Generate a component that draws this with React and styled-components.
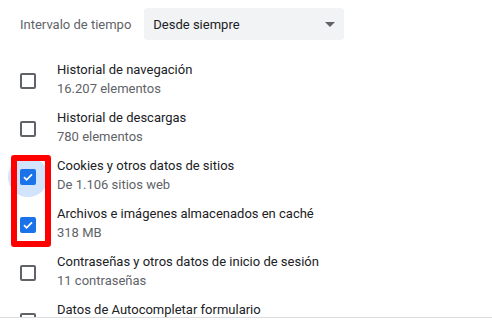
import React from 'react';
import styled, { createGlobalStyle } from 'styled-components';

const Global = createGlobalStyle`
  body { margin: 0; background: #fff; font-family: Roboto, "Liberation Sans", sans-serif; }
`;

const Page = styled.div`
  width: 492px;
  height: 326px;
  overflow: hidden;
  position: relative;
  background: #fff;
`;

const Scroller = styled.div`
  height: 318px;
  overflow: hidden;
  border-bottom: 1px solid #dadce0;
  padding: 8px 0 0 20px;
  box-sizing: border-box;
`;

const Header = styled.div`
  display: flex;
  align-items: center;
  gap: 13px;
  height: 32px;
`;

const Label = styled.span`
  font-size: 13px;
  color: #5f6368;
`;

const Select = styled.div`
  width: 200px;
  height: 32px;
  box-sizing: border-box;
  background: #f1f3f4;
  border-radius: 4px;
  display: flex;
  align-items: center;
  justify-content: space-between;
  padding: 0 8px 0 9px;
  font-size: 13px;
  color: #202124;
`;

const Arrow = styled.span`
  width: 0;
  height: 0;
  border-left: 5px solid transparent;
  border-right: 5px solid transparent;
  border-top: 5px solid #5f6368;
  margin-right: 1px;
`;

const List = styled.div`
  margin-top: 16px;
  display: flex;
  flex-direction: column;
`;

const Row = styled.div`
  height: 48px;
  display: flex;
  align-items: center;
  gap: 21px;
`;

const Control = styled.div`
  position: relative;
  width: 16px;
  height: 16px;
  flex: none;
  margin-top: 2px;
`;

const Ripple = styled.div`
  position: absolute;
  left: -12px;
  top: -12px;
  width: 40px;
  height: 40px;
  border-radius: 50%;
  background: #d2e3fc;
`;

const Box = styled.div`
  position: relative;
  width: 16px;
  height: 16px;
  box-sizing: border-box;
  border-radius: 2px;
  border: 2px solid ${p => (p.checked ? '#1a73e8' : '#5f6368')};
  background: ${p => (p.checked ? '#1a73e8' : 'transparent')};
  display: flex;
  align-items: center;
  justify-content: center;
`;

const Text = styled.div`
  display: flex;
  flex-direction: column;
  line-height: 19px;
  margin-top: -2px;
`;

const Title = styled.span`
  font-size: 13px;
  color: #202124;
`;

const Sub = styled.span`
  font-size: 13px;
  color: #5f6368;
`;

const Highlight = styled.div`
  position: absolute;
  left: 11px;
  top: 155px;
  width: 40px;
  height: 92px;
  box-sizing: border-box;
  border: 6px solid #ff0000;
  border-radius: 3px;
`;

const items = [
  { title: 'Historial de navegación', sub: '16.207 elementos' },
  { title: 'Historial de descargas', sub: '780 elementos' },
  { title: 'Cookies y otros datos de sitios', sub: 'De 1.106 sitios web', checked: true, focus: true },
  { title: 'Archivos e imágenes almacenados en caché', sub: '318 MB', checked: true },
  { title: 'Contraseñas y otros datos de inicio de sesión', sub: '11 contraseñas' },
  { title: 'Datos de Autocompletar formulario', sub: '\u00a0' },
];

const Check = () => (
  <svg width="12" height="12" viewBox="0 0 12 12">
    <path d="M2 6.2l2.6 2.6L10 3.4" fill="none" stroke="#fff" strokeWidth="1.8" />
  </svg>
);

const App = () => (
  <Page>
    <Global />
    <Scroller>
      <Header>
        <Label>Intervalo de tiempo</Label>
        <Select>
          Desde siempre
          <Arrow />
        </Select>
      </Header>
      <List>
        {items.map(it => (
          <Row key={it.title}>
            <Control>
              {it.focus && <Ripple />}
              <Box checked={it.checked}>{it.checked && <Check />}</Box>
            </Control>
            <Text>
              <Title>{it.title}</Title>
              <Sub>{it.sub}</Sub>
            </Text>
          </Row>
        ))}
      </List>
    </Scroller>
    <Highlight />
  </Page>
);

export default App;
